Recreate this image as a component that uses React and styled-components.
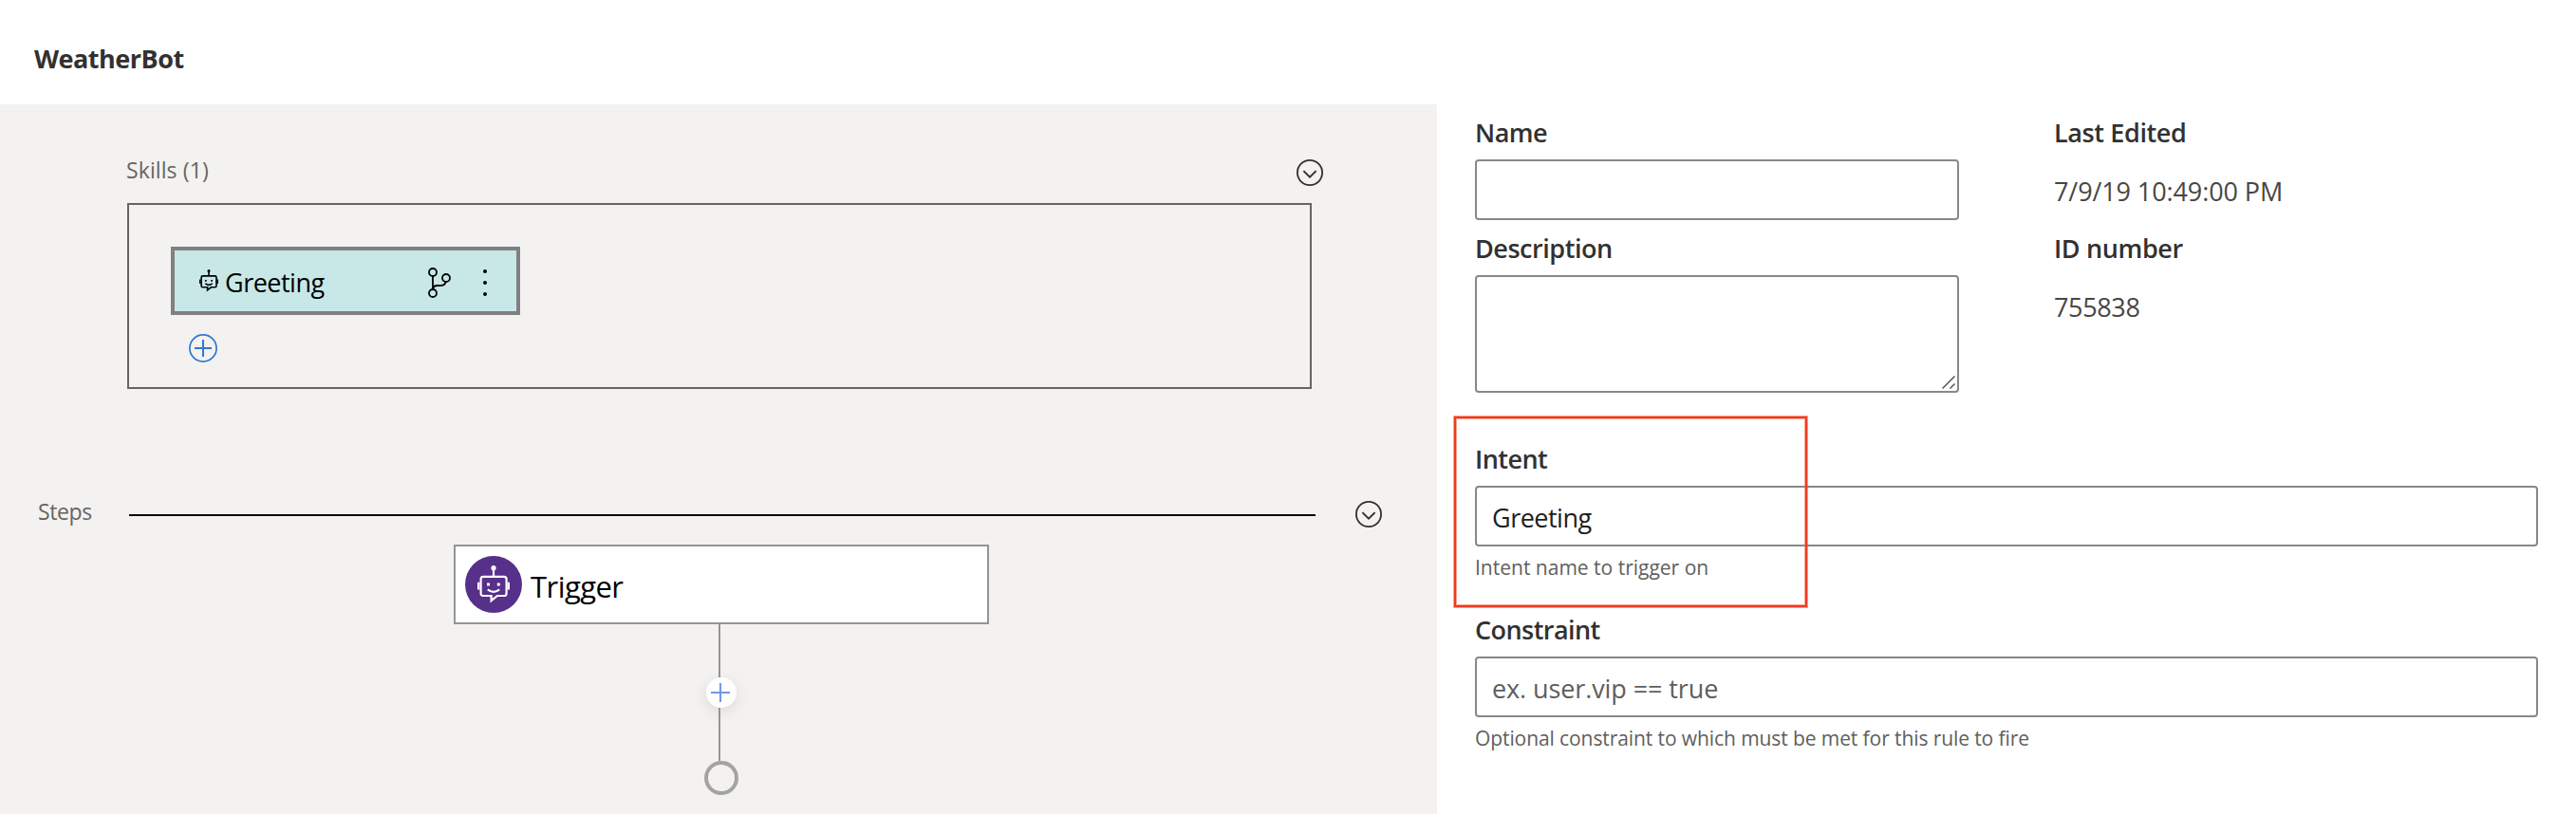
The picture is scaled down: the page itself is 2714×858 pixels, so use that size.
import React from "react";
import styled, { createGlobalStyle, css } from "styled-components";

const GlobalStyle = createGlobalStyle`
  *, *::after { box-sizing: border-box; }
  body {
    margin: 0;
    background: #fff;
    font-family: "Open Sans", "Noto Sans", sans-serif;
    color: #323130;
  }
  svg { display: block; flex: none; }
`;

const Page = styled.div`
  width: 2714px;
  height: 858px;
  display: flex;
  flex-direction: column;
  overflow: hidden;
`;

const Header = styled.header`
  flex: none;
  height: 110px;
  padding: 44px 0 0 36px;
`;

const BotName = styled.h1`
  margin: 0;
  font-size: 27px;
  line-height: 36px;
  font-weight: 700;
  letter-spacing: -0.5px;
`;

const Main = styled.main`
  flex: 1;
  display: grid;
  grid-template-columns: 1514px 1fr;
  min-height: 0;
`;

const Canvas = styled.section`
  background: #f3f2f0;
  padding-top: 54px;
`;

const SkillsHeader = styled.div`
  display: flex;
  justify-content: space-between;
  align-items: flex-start;
  height: 50px;
  width: 1261px;
  margin-left: 133px;
`;

const StepsHeader = styled(SkillsHeader)`
  width: 1416px;
  margin: 114px 0 0 40px;
`;

const SectionLabel = styled.span`
  font-size: 23px;
  line-height: 30px;
  color: #666462;
  white-space: nowrap;
  letter-spacing: ${(p) => p.$track || 0}px;
`;

const StepsRule = styled.div`
  width: 1250px;
  height: 2px;
  margin: 18px 42px 0 auto;
  background: #0a0606;
`;

const CollapseButton = styled.button`
  border: 0;
  padding: 0;
  margin-top: 4px;
  background: none;
`;

const SkillsBox = styled.div`
  width: 1248px;
  height: 196px;
  margin-left: 134px;
  padding: 44px;
  border: 2px solid #676462;
`;

const SkillChip = styled.div`
  display: flex;
  align-items: flex-start;
  width: 368px;
  height: 72px;
  padding: 0 31px 0 26px;
  border: 4px solid #808080;
  background: #c7e8e7;
`;

const ChipIcon = styled.div`
  margin: ${(p) => p.$m};
`;

const ChipLabel = styled.span`
  margin: 16px auto 0 7px;
  font-size: 27px;
  line-height: 36px;
  color: #000;
  letter-spacing: -0.5px;
`;

const AddSkill = styled.button`
  display: block;
  margin: 20px 0 0 19px;
  padding: 0;
  border: 0;
  background: none;
`;

const Flow = styled.div`
  display: flex;
  flex-direction: column;
  align-items: center;
  width: 564px;
  margin-left: 478px;
`;

const TriggerNode = styled.div`
  display: flex;
  width: 564px;
  height: 84px;
  padding: 10px;
  border: 2px solid #979593;
  background: #fff;
`;

const TriggerBadge = styled.div`
  display: flex;
  justify-content: center;
  width: 60px;
  height: 60px;
  padding-top: 10px;
  border-radius: 50%;
  background: #57308a;
`;

const TriggerLabel = styled.span`
  margin: 11px 0 0 9px;
  font-size: 31px;
  line-height: 42px;
  color: #000;
  letter-spacing: -0.55px;
`;

const Connector = styled.div`
  width: 2px;
  height: 56px;
  margin-right: 4px;
  background: #979593;
`;

const AddStep = styled.div`
  width: 32px;
  height: 32px;
  border-radius: 50%;
  background: #fff;
  box-shadow: 0 4px 16px rgba(0, 0, 0, 0.1);
`;

const EndNode = styled.div`
  width: 36px;
  height: 36px;
  border: 4px solid #a3a3a2;
  border-radius: 50%;
`;

const Properties = styled.section`
  padding: 12px 40px 0 40px;
`;

const Summary = styled.div`
  display: grid;
  grid-template-columns: 510px 1fr;
  column-gap: 100px;
  height: 344px;
`;

const Field = styled.div`
  display: flex;
  flex-direction: column;
  margin-bottom: ${(p) => p.$gap || 0}px;
`;

const Label = styled.label`
  height: 46px;
  font-size: 27px;
  line-height: 36px;
  font-weight: 600;
  white-space: nowrap;
  letter-spacing: ${(p) => p.$track || 0}px;
`;

const inputFrame = css`
  width: 100%;
  margin: 0;
  padding: 0 0 0 16px;
  border: 2px solid #8a8886;
  border-radius: 4px;
  background: #fff;
  font: 27px/36px "Open Sans", "Noto Sans", sans-serif;
  color: #201f1e;
  outline: none;
  letter-spacing: ${(p) => p.$track || 0}px;
`;

const TextInput = styled.input`
  ${inputFrame}
  height: 64px;
  padding-top: 2px;
  &::placeholder { color: #605e5c; opacity: 1; }
`;

const AreaWrap = styled.div`
  display: grid;
  height: 124px;
  > * { grid-area: 1 / 1; }
  > svg { align-self: end; justify-self: end; margin: 0 4px 4px 0; }
`;

const TextArea = styled.textarea`
  ${inputFrame}
  height: 124px;
  resize: none;
`;

const Value = styled.span`
  margin-top: 16px;
  font-size: 27px;
  line-height: 36px;
  color: #484644;
  white-space: nowrap;
  letter-spacing: ${(p) => p.$track || 0}px;
`;

const Hint = styled.span`
  margin-top: 7px;
  font-size: 21px;
  line-height: 30px;
  color: #605e5c;
  white-space: nowrap;
  letter-spacing: ${(p) => p.$track || 0}px;
`;

const Highlighted = styled.div`
  position: relative;
  &::after {
    content: "";
    position: absolute;
    left: -22px;
    top: -27px;
    width: 372px;
    height: 201px;
    border: 2px solid #f03c1e;
    box-shadow: 0 0 0 1px rgba(240, 70, 40, 0.5), inset 0 0 0 1px rgba(240, 70, 40, 0.5);
    pointer-events: none;
  }
`;

const ChevronCircle = () => (
  <svg width="28" height="28" viewBox="0 0 28 28" fill="none" stroke="#323130">
    <circle cx="14" cy="14" r="13.1" strokeWidth="1.8" />
    <path d="M7.4 12.1 14 18.6 20.6 12.1" strokeWidth="2" />
  </svg>
);

const BotIcon = ({ width, height, stroke, color }) => (
  <svg width={width} height={height} viewBox="0 0 34 40" fill="none" stroke={color} strokeWidth={stroke}>
    <circle cx="17" cy="2.7" r="2.6" fill={color} stroke="none" />
    <path d="M17 4V12" />
    <path d="M6 11.8H28Q30.6 11.8 30.6 14.4V29.4Q30.6 32 28 32H21L14.6 37.2V32H6Q3.6 32 3.6 29.4V14.4Q3.6 11.8 6 11.8Z" />
    <path d="M1.2 17.8V25.4M32.8 17.8V25.4" strokeWidth="2.4" />
    <path d="M10 18.6h3v3h-3zM20.8 18.6h3v3h-3z" fill={color} stroke="none" />
    <path d="M10.8 25.4Q17 30.4 23.2 25.4" />
  </svg>
);

const BranchIcon = () => (
  <svg width="24" height="32" viewBox="0 0 24 32" fill="none" stroke="#000" strokeWidth="1.8">
    <circle cx="5" cy="5" r="4" />
    <circle cx="5" cy="27" r="4" />
    <circle cx="19" cy="11" r="4" />
    <path d="M5 9V23M5.2 22.6C5.6 20.2 7 19 9.4 19H13.6C16.4 19 18.2 17.4 18.8 14.8" />
  </svg>
);

const MoreIcon = () => (
  <svg width="4" height="28" viewBox="0 0 4 28" fill="#000">
    <circle cx="2" cy="2" r="2" />
    <circle cx="2" cy="14" r="2" />
    <circle cx="2" cy="26" r="2" />
  </svg>
);

const CirclePlus = () => (
  <svg width="30" height="30" viewBox="0 0 30 30" fill="none" stroke="#2f78d2">
    <circle cx="15" cy="15" r="14.1" strokeWidth="1.7" />
    <path d="M15 6V24M6 15H24" strokeWidth="2" />
  </svg>
);

const Plus = () => (
  <svg width="32" height="32" viewBox="0 0 32 32" fill="none" stroke="#7196ea" strokeWidth="2">
    <path d="M15 6V26M5 16H25" />
  </svg>
);

const Grip = () => (
  <svg width="14" height="14" viewBox="0 0 14 14" fill="none" stroke="#555" strokeWidth="1.5">
    <path d="M0.5 13.5 13.5 0.5M8.5 13.5 13.5 8.5" />
  </svg>
);

export default function App() {
  return (
    <Page>
      <GlobalStyle />
      <Header>
        <BotName>WeatherBot</BotName>
      </Header>
      <Main>
        <Canvas>
          <SkillsHeader>
            <SectionLabel $track={0.1}>Skills (1)</SectionLabel>
            <CollapseButton><ChevronCircle /></CollapseButton>
          </SkillsHeader>
          <SkillsBox>
            <SkillChip>
              <ChipIcon $m="20px 0 0 0"><BotIcon width={20} height={23.5} stroke={2.8} color="#000" /></ChipIcon>
              <ChipLabel>Greeting</ChipLabel>
              <ChipIcon $m="18px 34px 0 0"><BranchIcon /></ChipIcon>
              <ChipIcon $m="20px 0 0 0"><MoreIcon /></ChipIcon>
            </SkillChip>
            <AddSkill><CirclePlus /></AddSkill>
          </SkillsBox>
          <StepsHeader>
            <SectionLabel $track={-0.4}>Steps</SectionLabel>
            <StepsRule />
            <CollapseButton><ChevronCircle /></CollapseButton>
          </StepsHeader>
          <Flow>
            <TriggerNode>
              <TriggerBadge><BotIcon width={34} height={40} stroke={2.2} color="#fff" /></TriggerBadge>
              <TriggerLabel>Trigger</TriggerLabel>
            </TriggerNode>
            <Connector />
            <AddStep><Plus /></AddStep>
            <Connector />
            <EndNode />
          </Flow>
        </Canvas>
        <Properties>
          <Summary>
            <div>
              <Field $gap={12}>
                <Label $track={-0.5}>Name</Label>
                <TextInput />
              </Field>
              <Field>
                <Label $track={-0.46}>Description</Label>
                <AreaWrap><TextArea /><Grip /></AreaWrap>
              </Field>
            </div>
            <div>
              <Field $gap={24}>
                <Label $track={-0.38}>Last Edited</Label>
                <Value $track={-0.1}>7/9/19 10:49:00 PM</Value>
              </Field>
              <Field>
                <Label $track={-0.37}>ID number</Label>
                <Value $track={-0.35}>755838</Value>
              </Field>
            </div>
          </Summary>
          <Highlighted>
            <Field $gap={33}>
              <Label $track={-0.55}>Intent</Label>
              <TextInput $track={-0.5} defaultValue="Greeting" />
              <Hint>Intent name to trigger on</Hint>
            </Field>
          </Highlighted>
          <Field>
            <Label $track={-0.55}>Constraint</Label>
            <TextInput $track={-0.1} placeholder="ex. user.vip == true" />
            <Hint $track={-0.09}>Optional constraint to which must be met for this rule to fire</Hint>
          </Field>
        </Properties>
      </Main>
    </Page>
  );
}
